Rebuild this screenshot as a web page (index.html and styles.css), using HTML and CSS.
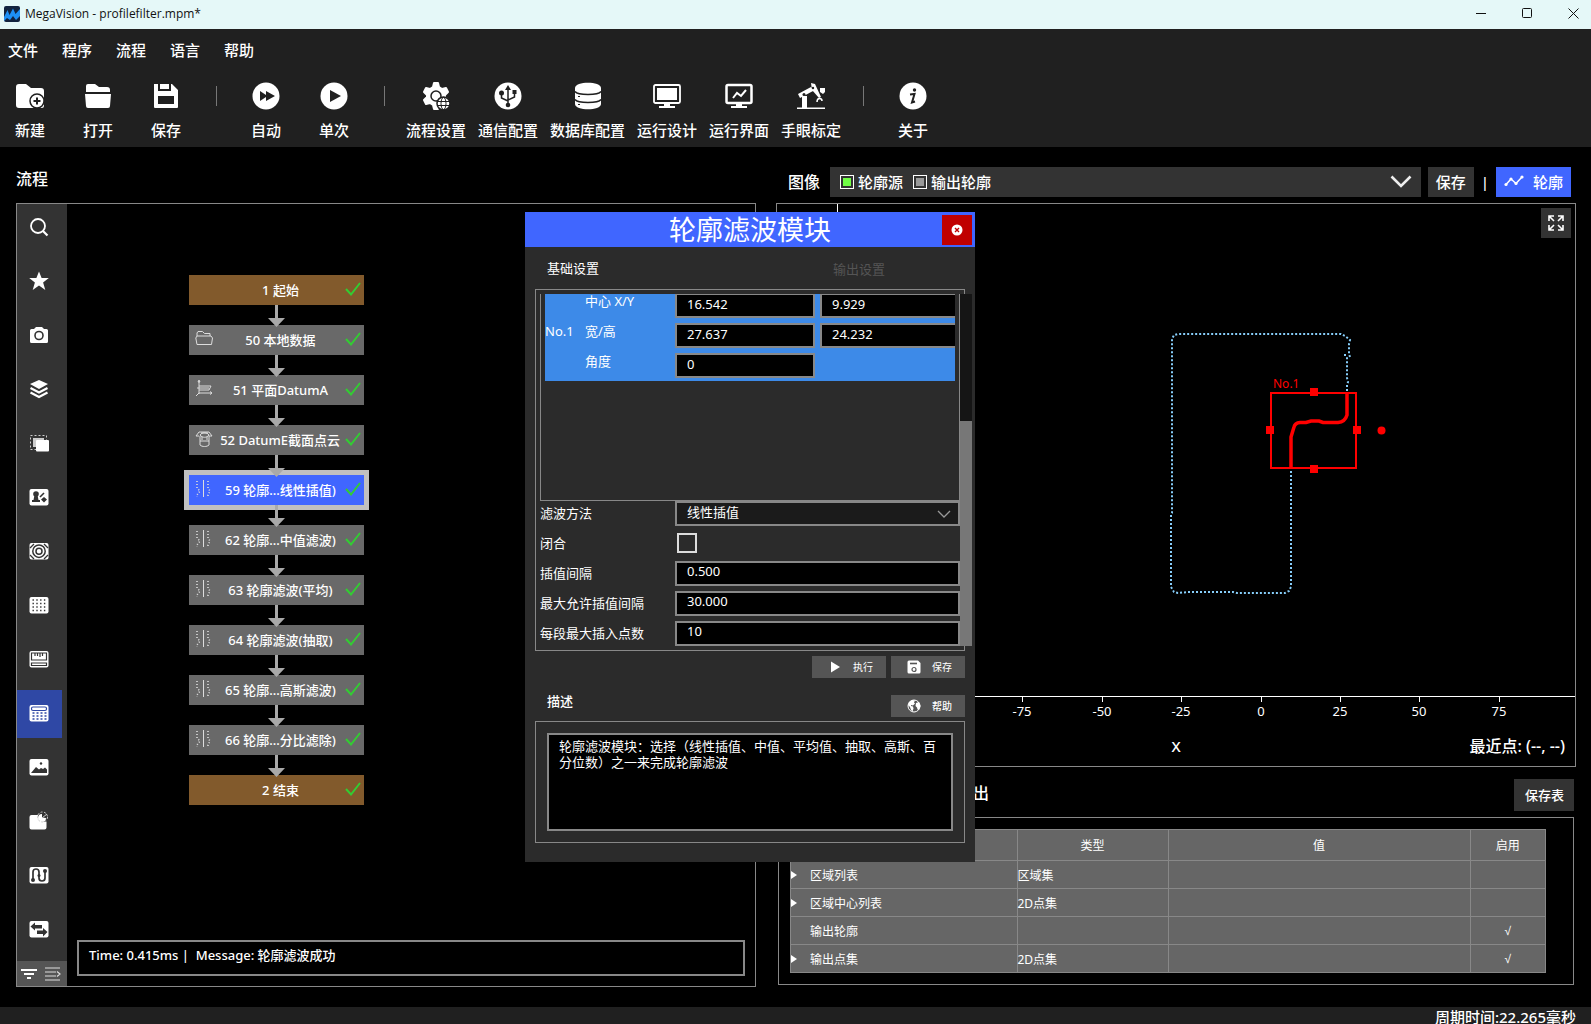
FILE: index.html
```html
<!DOCTYPE html>
<html lang="zh-CN">

<head>
    <meta charset="UTF-8">
    <meta name="viewport" content="width=device-width, initial-scale=1.0">
    <title>MegaVision - profilefilter.mpm*</title>
    <link rel="stylesheet" href="styles.css">
</head>

<body>
    <header class="titlebar">
        <svg class="logo" width="16" height="16" viewBox="0 0 16 16">
            <rect width="16" height="16" rx="2" fill="#12233f" />
            <path d="M0 11 3.500 4 5.500 9 9 2.500 11.500 8 16 3v7l-4 4-3-4-3 4-3-2-3 3z" fill="#1e90f5" />
        </svg>
        <span class="title">MegaVision - profilefilter.mpm*</span>
        <div class="win-btns">
            <button aria-label="最小化"><svg width="11" height="11" viewBox="0 0 11 11"><path d="M0 5.500h10" /></svg></button>
            <button aria-label="最大化"><svg width="11" height="11" viewBox="0 0 11 11"><rect x=".5" y=".5" width="9" height="9" rx="1" /></svg></button>
            <button aria-label="关闭"><svg width="11" height="11" viewBox="0 0 11 11"><path d="M.5.5l10 10M10.500.5l-10 10" /></svg></button>
        </div>
    </header>

    <div class="top">
        <nav class="menu">
            <a href="#">文件</a>
            <a href="#">程序</a>
            <a href="#">流程</a>
            <a href="#">语言</a>
            <a href="#">帮助</a>
        </nav>
        <div class="toolbar">
            <button>
                <svg viewBox="0 0 28 28"><path fill="#fff" d="M0 5a3 3 0 0 1 3-3h7l5 4h10a3 3 0 0 1 3 3v15a2 2 0 0 1-2 2H3a3 3 0 0 1-3-3z" /><circle cx="21" cy="19" r="7" fill="#fff" stroke="#202020" stroke-width="1.500" /><path d="M21 15.500v7M17.500 19h7" stroke="#202020" stroke-width="2" /></svg>
                <span>新建</span>
            </button>
            <button>
                <svg viewBox="0 0 28 28"><path fill="#fff" d="M2 10V4a2 2 0 0 1 2-2h7l4 3h8a3 3 0 0 1 3 3v2zM1 12h26l-1 12a2 2 0 0 1-2 2H4a2 2 0 0 1-2-2z" /></svg>
                <span>打开</span>
            </button>
            <button>
                <svg viewBox="0 0 28 28"><path fill="#fff" fill-rule="evenodd" d="M2 2h4v7h13V2h1l6 6v17a1 1 0 0 1-1 1H3a1 1 0 0 1-1-1zM6 14v8h16v-8z" /><path fill="#fff" d="M8 2h9v5H8z" /></svg>
                <span>保存</span>
            </button>
            <i class="sep"></i>
            <button>
                <svg viewBox="0 0 28 28"><circle cx="14" cy="14" r="13.500" fill="#fff" /><path d="M8 9l6 4V9l9 5-9 5v-4l-6 4z" fill="#202020" /></svg>
                <span>自动</span>
            </button>
            <button>
                <svg viewBox="0 0 28 28"><circle cx="14" cy="14" r="13.500" fill="#fff" /><path d="M10 8l11 6-11 6z" fill="#202020" /></svg>
                <span>单次</span>
            </button>
            <i class="sep"></i>
            <button>
                <svg viewBox="0 0 28 28"><path fill="#fff" stroke="#fff" stroke-width="2" stroke-linejoin="round" d="M12 1h4l1 4 3 2 4-1 2 4-3 3v2l3 3-2 4-4-1-3 2-1 4h-4l-1-4-3-2-4 1-2-4 3-3v-2L2 10l2-4 4 1 3-2z" /><circle cx="14" cy="14" r="5" fill="none" stroke="#202020" stroke-width="1.500" /><circle cx="21.500" cy="21.500" r="6.500" fill="#fff" stroke="#202020" stroke-width="1.500" /><g fill="none" stroke="#202020"><ellipse cx="21.500" cy="21.500" rx="2.500" ry="6" /><path d="M15.500 19.500h12M15.500 23.500h12" /></g></svg>
                <span>流程设置</span>
            </button>
            <button>
                <svg viewBox="0 0 28 28"><circle cx="14" cy="14" r="13.500" fill="#fff" /><g fill="none" stroke="#202020" stroke-width="1.500"><path d="M14 22V6M7.500 12v4l6.500 3M20.500 12v3L14 18" /></g><path d="M14 3l3 5h-6zM18.500 8h4v4h-4z" fill="#202020" /><circle cx="7.500" cy="11" r="2.500" fill="#202020" /><circle cx="14" cy="23" r="2.300" fill="#202020" /></svg>
                <span>通信配置</span>
            </button>
            <button>
                <svg viewBox="0 0 28 28"><path fill="#fff" d="M1 6c0-7 26-7 26 0v16c0 7-26 7-26 0z" /><path d="M1 9.500c3 4 23 4 26 0M1 17.500c3 4 23 4 26 0" fill="none" stroke="#202020" stroke-width="1.500" /><path d="M4 14.500h2M4 22.500h2" stroke="#202020" /></svg>
                <span>数据库配置</span>
            </button>
            <button>
                <svg viewBox="0 0 28 28"><rect x="1" y="3" width="26" height="18" rx="1.500" fill="none" stroke="#fff" stroke-width="1.800" /><path fill="#fff" d="M4 6h20v12H4zM11 21h6v3h5v2H6v-2h5z" /></svg>
                <span>运行设计</span>
            </button>
            <button>
                <svg viewBox="0 0 28 28"><rect x="1.500" y="3" width="25" height="18" rx="1.500" fill="none" stroke="#fff" stroke-width="2.500" /><path d="M8 16l4-5 4 3 5-6" fill="none" stroke="#fff" stroke-width="2" /><path fill="#fff" d="M11 21h6v3h5v2H6v-2h5z" /></svg>
                <span>运行界面</span>
            </button>
            <button>
                <svg viewBox="0 0 28 28"><path fill="#fff" d="M0 25.500h28V27H0zM5 14h5v11.500H5zM1 12L14 5l2 4-13 7zM14 1l4 1 6 13-2 1L15 8zM23 6h5v4l-2 2-3-2z" /><circle cx="7" cy="12.500" r="1.500" fill="#202020" /><circle cx="16" cy="6" r="1.200" fill="#202020" /><path d="M20 20c0-5 5-4 5-1" fill="none" stroke="#fff" stroke-width="1.500" /></svg>
                <span>手眼标定</span>
            </button>
            <i class="sep"></i>
            <button>
                <svg viewBox="0 0 28 28"><circle cx="14" cy="14" r="13.500" fill="#fff" /><circle cx="15.500" cy="8" r="1.700" fill="#202020" /><path d="M11 12.500l4.500-.5-2.500 8.500 3-1" fill="none" stroke="#202020" stroke-width="2" /></svg>
                <span>关于</span>
            </button>
        </div>
    </div>

    <main class="main">
        <!-- 流程 -->
        <section class="flow">
            <h2>流程</h2>
            <div class="flow-panel">
                <aside class="side">
                    <div class="side-tools">
                        <button aria-label="搜索"><svg viewBox="0 0 20 18"><circle cx="9" cy="8" r="7" fill="none" stroke="#fff" stroke-width="1.800" /><path d="M14 13l4.500 4.500" stroke="#fff" stroke-width="2.200" /></svg></button>
                        <button aria-label="收藏"><svg viewBox="0 0 20 18"><path fill="#fff" d="M10-.5l2.600 6.600h7.200l-5.700 4.300 2.200 7.600-6.300-4.500L3.700 18l2.200-7.600L.2 6.100h7.200z" /></svg></button>
                        <button aria-label="相机"><svg viewBox="0 0 20 18"><path fill="#fff" d="M2.500 3H5l2-2h6l2 2h2.500A1.500 1.500 0 0 1 19 4.500v11a1.500 1.500 0 0 1-1.500 1.500h-15A1.500 1.500 0 0 1 1 15.500v-11A1.500 1.500 0 0 1 2.500 3z" /><circle cx="10" cy="9.500" r="4" fill="none" stroke="#333" stroke-width="1.600" /></svg></button>
                        <button aria-label="图层"><svg viewBox="0 0 20 18"><path fill="#fff" d="M10 0l9 4-9 5-9-5z" /><path d="M1.500 8l8.500 4.500L18.500 8M1.500 12.500L10 17l8.500-4.500" fill="none" stroke="#fff" stroke-width="2.200" /></svg></button>
                        <button aria-label="区域"><svg viewBox="0 0 20 18"><rect x="1.500" y="1.500" width="16" height="14" fill="none" stroke="#ccc" stroke-dasharray="2 2" /><path fill="#ccc" d="M4 4h11v9H4z" /><rect x="7" y="6" width="13" height="11.500" rx="1" fill="#fff" /></svg></button>
                        <button aria-label="标定"><svg viewBox="0 0 20 18"><rect x=".5" y="1" width="19" height="16.500" rx="2" fill="#fff" /><g fill="#333"><circle cx="7" cy="6" r="2.800" /><path d="M5.500 7h3l1 5h-5zM3 12h8v2H3zM15 9l3 2.500-3 3-3-3z" /></g><path d="M11 9l4-4" stroke="#333" stroke-width="1.600" /></svg></button>
                        <button aria-label="定位"><svg viewBox="0 0 20 18"><rect x=".5" y="1" width="19" height="16.500" rx="2" fill="#fff" /><g fill="none" stroke="#333" stroke-width="1.500"><circle cx="10" cy="9.200" r="6.200" /><circle cx="10" cy="9.200" r="3" /><path d="M1 6l4-4M15 2l4 4M1 13l4 4M15 17l4-4" stroke-width="1.300" /></g></svg></button>
                        <button aria-label="网格"><svg viewBox="0 0 20 18"><rect x=".5" y="1" width="19" height="16.500" rx="2" fill="#fff" /><path d="M3.500 4h14M3.500 7.500h14M3.500 11h14M3.500 14.500h14" stroke="#333" stroke-width="1.300" stroke-dasharray="1.400 2.400" /></svg></button>
                        <button aria-label="测量"><svg viewBox="0 0 20 18"><rect x=".5" y="1" width="19" height="16.500" rx="2" fill="#fff" /><path d="M2.500 3h15v7h-15zM2.500 15.500v-2.500h15v2.500z" fill="none" stroke="#333" stroke-width="1.200" /><path d="M6 3v3M8.500 3v3M11 3v4M13.500 3v3" stroke="#333" stroke-width="1.200" /></svg></button>
                        <button class="active" aria-label="计算"><svg viewBox="0 0 20 18"><rect x=".5" y="1" width="19" height="16.500" rx="2" fill="#fff" /><rect x="2.500" y="3" width="15" height="3.500" rx="1.500" fill="none" stroke="#2f48a5" stroke-width="1.200" /><path d="M3.500 9h14M3.500 12h14M3.500 15h14" stroke="#2f48a5" stroke-width="1.400" stroke-dasharray="2 2" /></svg></button>
                        <button aria-label="图像"><svg viewBox="0 0 20 18"><rect x=".5" y="1" width="19" height="16.500" rx="2" fill="#fff" /><path d="M2 15l5-6 3 2.500 2-1.500 2 1 2-1.500 2 2V15z" fill="#333" /><circle cx="12" cy="5.500" r="1.200" fill="#333" /></svg></button>
                        <button aria-label="形状"><svg viewBox="0 0 20 18"><path fill="#fff" d="M2.500 3H9c-1 5 3 7.500 8.500 6.500v6a2 2 0 0 1-2 2h-13a2 2 0 0 1-2-2V5a2 2 0 0 1 2-2z" /><path fill="#fff" d="M13 5.500V2a4 4 0 1 0 4 4z" /><circle cx="13.500" cy="5" r="5" fill="none" stroke="#ccc" stroke-dasharray="2 1.500" /><path d="M13 6l5-4" stroke="#ccc" /></svg></button>
                        <button aria-label="路径"><svg viewBox="0 0 20 18"><rect x=".5" y="1" width="19" height="16.500" rx="2" fill="#fff" /><path d="M4 14V6c0-4 6-4 6 0v6c0 4 6 4 6 0V5" fill="none" stroke="#333" stroke-width="1.700" /><g fill="#333"><circle cx="4" cy="14" r="2" /><circle cx="16" cy="5" r="2" /><circle cx="10" cy="9.500" r="1.500" /></g></svg></button>
                        <button aria-label="转换"><svg viewBox="0 0 20 18"><rect x=".5" y="1" width="19" height="16.500" rx="2" fill="#fff" /><path fill="#333" d="M1.500 6.500L6 2.500v2.500h7v3.500H6v2zM18.500 12L14 8v2.500H8V14h6v2.500z" /></svg></button>
                    </div>
                    <div class="side-foot">
                        <button aria-label="筛选"><svg width="18" height="16" viewBox="0 0 18 16"><path d="M1 4h16M4 8h10M7 12h4" stroke="#fff" stroke-width="1.800" /></svg></button>
                        <button aria-label="展开"><svg width="18" height="16" viewBox="0 0 18 16"><path d="M1 2h15M1 6h11M1 10h11M1 14h15M13 5.500L16 8l-3 2.500" fill="none" stroke="#ddd" stroke-width="1.200" /></svg></button>
                    </div>
                </aside>
                <div class="canvas">
                    <div class="nodes"></div>
                    <div class="message">Time: 0.415ms |&nbsp; Message: 轮廓滤波成功</div>
                </div>
            </div>
        </section>

        <section class="right">
            <div class="image-bar">
                <h2>图像</h2>
                <div class="source">
                    <label><input type="checkbox" checked><span>轮廓源</span></label>
                    <label><input type="checkbox"><span>输出轮廓</span></label>
                    <button class="drop" aria-label="展开列表"><svg width="22" height="14" viewBox="0 0 22 14"><path d="M1.500 1.500L11 11l9.500-9.500" fill="none" stroke="#eee" stroke-width="2.600" /></svg></button>
                </div>
                <button class="btn">保存</button>
                <span class="bar">|</span>
                <button class="btn blue">
                    <svg width="20" height="12" viewBox="0 0 20 12"><path d="M2 9.500l5-5.500 5 4.500 6-6.500" fill="none" stroke="#fff" stroke-width="1.500" /><g fill="#fff"><circle cx="2" cy="9.500" r="1.600" /><circle cx="7" cy="4" r="1.600" /><circle cx="12" cy="8.500" r="1.600" /><circle cx="18" cy="2" r="1.600" /></g></svg>
                    轮廓
                </button>
            </div>

            <div class="chart">
                <button class="expand" aria-label="全屏"><svg width="16" height="16" viewBox="0 0 16 16"><path d="M1 6V1h5M1 1l5 5M10 1h5v5M15 1l-5 5M1 10v5h5M1 15l5-5M15 10v5h-5M15 15l-5-5" fill="none" stroke="#fff" stroke-width="1.600" /></svg></button>
                <svg class="plot" viewBox="777 204 798 520">
                    <g class="axis">
                        <path d="M837.500 204V696.500H1575" />
                        <path d="M863.500 697v5M943.500 697v5M1022.500 697v5M1102.500 697v5M1181.500 697v5M1261.500 697v5M1340.500 697v5M1419.500 697v5M1499.500 697v5" />
                    </g>
                    <g class="tick">
                        <text x="1022" y="716">-75</text>
                        <text x="1102" y="716">-50</text>
                        <text x="1181" y="716">-25</text>
                        <text x="1261" y="716">0</text>
                        <text x="1340" y="716">25</text>
                        <text x="1419" y="716">50</text>
                        <text x="1499" y="716">75</text>
                    </g>
                    <path class="outline" d="M1347 391V385L1348 382L1347 378V357M1344 355h2M1350 357L1349 354V344L1350 340L1345 336L1341 334H1178L1174 335L1172 339V513L1171 515V587L1174 592L1178 593L1188 592H1233L1237 593H1285L1289 591L1291 587V470" />
                    <g class="region">
                        <rect x="1271" y="393" width="85" height="75" />
                        <path d="M1347 393V415Q1345 422 1338 422.500H1323L1319 421H1311L1306 422.500H1300Q1295 423 1294 427L1291 437V469" stroke-width="3.500" />
                        <path class="fill" d="M1310 388h8v8h-8zM1266 426h8v8h-8zM1353 426h8v8h-8zM1310 465h8v8h-8z" />
                        <circle class="fill" cx="1381.500" cy="430.500" r="4" />
                        <text x="1273" y="388">No.1</text>
                    </g>
                </svg>
                <div class="chart-foot">
                    <span>X</span>
                    <span class="near">最近点: (--, --)</span>
                </div>
            </div>

            <div class="out-bar">
                <h2>输出</h2>
                <button class="btn save-table">保存表</button>
            </div>
            <div class="out">
                <table>
                    <colgroup>
                        <col class="c1">
                        <col class="c2">
                        <col class="c3">
                        <col class="c4">
                    </colgroup>
                    <thead>
                        <tr><th>名称</th><th>类型</th><th>值</th><th>启用</th></tr>
                    </thead>
                    <tbody>
                        <tr><td class="name more">区域列表</td><td>区域集</td><td></td><td></td></tr>
                        <tr><td class="name more">区域中心列表</td><td>2D点集</td><td></td><td></td></tr>
                        <tr><td class="name">输出轮廓</td><td></td><td></td><td class="on">√</td></tr>
                        <tr><td class="name more">输出点集</td><td>2D点集</td><td></td><td class="on">√</td></tr>
                    </tbody>
                </table>
            </div>
        </section>
    </main>

    <footer class="status">周期时间:22.265毫秒</footer>

    <!-- 模块窗口 -->
    <div class="dialog" role="dialog" aria-labelledby="dlg-title">
        <div class="dlg-head">
            <h1 id="dlg-title">轮廓滤波模块</h1>
            <button class="close" aria-label="关闭"><svg width="12" height="12" viewBox="0 0 12 12"><circle cx="6" cy="6" r="5.500" fill="#fff" /><path d="M4 4l4 4M8 4l-4 4" stroke="#c00000" stroke-width="1.400" /></svg></button>
        </div>
        <div class="tabs">
            <button class="tab on">基础设置</button>
            <button class="tab">输出设置</button>
        </div>
        <div class="params">
            <div class="scroll">
                <div class="regions">
                    <div class="item">
                        <span class="no">No.1</span>
                        <label for="cx">中心 X/Y</label>
                        <input id="cx" value="16.542">
                        <input aria-label="中心 Y" value="9.929">
                        <label for="rw">宽/高</label>
                        <input id="rw" value="27.637">
                        <input aria-label="高" value="24.232">
                        <label for="ang">角度</label>
                        <input id="ang" value="0">
                    </div>
                </div>
                <div class="field">
                    <label for="method">滤波方法</label>
                    <div class="select">
                        <select id="method">
                            <option>线性插值</option>
                        </select>
                        <svg width="14" height="8" viewBox="0 0 14 8"><path d="M1 1l6 6 6-6" fill="none" stroke="#999" stroke-width="1.300" /></svg>
                    </div>
                </div>
                <div class="field">
                    <label for="closed">闭合</label>
                    <input type="checkbox" id="closed">
                </div>
                <div class="field">
                    <label for="gap">插值间隔</label>
                    <input id="gap" value="0.500">
                </div>
                <div class="field">
                    <label for="maxgap">最大允许插值间隔</label>
                    <input id="maxgap" value="30.000">
                </div>
                <div class="field">
                    <label for="maxnum">每段最大插入点数</label>
                    <input id="maxnum" value="10">
                </div>
            </div>
            <div class="track"><div class="thumb"></div></div>
        </div>
        <div class="actions">
            <button class="small"><svg width="14" height="14" viewBox="0 0 14 14"><path d="M3 1.500l9 5.500-9 5.500z" fill="#fff" /></svg><span>执行</span></button>
            <button class="small"><svg width="14" height="14" viewBox="0 0 14 14"><path d="M.5 2A1.500 1.500 0 0 1 2 .5h9L13.500 3v9a1.500 1.500 0 0 1-1.500 1.500H2A1.500 1.500 0 0 1 .5 12z" fill="#fff" /><path d="M3 3.500h7" stroke="#555" stroke-width="1.600" /><circle cx="7" cy="9.500" r="2" fill="none" stroke="#555" stroke-width="1.200" /></svg><span>保存</span></button>
        </div>
        <div class="desc-head">
            <span>描述</span>
            <button class="small"><svg width="14" height="14" viewBox="0 0 14 14"><circle cx="7" cy="7" r="6" fill="none" stroke="#fff" /><path fill="#fff" d="M2 3l3-2 3 .5-1 2 1 1-2 2-2-.5v1l2 .5.5 2-1 3L4 11 3 8 1 6zM9 4l3-1 1.500 4L12 11l-1.500-.5-.5-2L8.500 7z" /></svg><span>帮助</span></button>
        </div>
        <div class="desc">
            <textarea aria-label="描述" readonly>轮廓滤波模块：选择（线性插值、中值、平均值、抽取、高斯、百分位数）之一来完成轮廓滤波</textarea>
        </div>
    </div>

    <script src="script.js"></script>
</body>

</html>
```
FILE: script.js
```js
// 流程节点
const nodes = [
    { text: '1 起始', type: 'end' },
    { text: '50 本地数据', icon: 'folder' },
    { text: '51 平面DatumA', icon: 'plane' },
    { text: '52 DatumE截面点云', icon: 'cloud' },
    { text: '59 轮廓…线性插值)', icon: 'filter', type: 'selected' },
    { text: '62 轮廓…中值滤波)', icon: 'filter' },
    { text: '63 轮廓滤波(平均)', icon: 'filter' },
    { text: '64 轮廓滤波(抽取)', icon: 'filter' },
    { text: '65 轮廓…高斯滤波)', icon: 'filter' },
    { text: '66 轮廓…分比滤除)', icon: 'filter' },
    { text: '2 结束', type: 'end' }
]

const icons = {
    folder: '<path d="M2 6V3l1-1.500h4.500l2 2H15V6M2 6h14l1.500 2-1 6.500H2L.8 8z"/>',
    plane: '<path d="M4 1v13M1 16l3-3h13M4 6h12l-2 4H4M2 8h12M4 0L3 2h2zM15 11.500l2 1.500-2 1.500"/>',
    cloud: '<path d="M1 6l3-4h10l3 4h-3M1 6h3M5 6v9c2 2 7 2 9 0V6M5 5c2-3 7-3 9 0-2 3-7 3-9 0M6 3h7M5 11h9M7 7v3M12 7v3"/>',
    filter: '<path d="M8.500 0v17"/><path d="M2 1v7l3 3-3 4v2M13 1v7l2 3-2 4v2" stroke-dasharray="1 2" stroke-width="1.600"/>'
}

const nodesEl = document.querySelector('.nodes')

nodes.forEach((node, i) => {
    const icon = node.icon ? `<svg width="18" height="18" viewBox="0 0 18 18">${icons[node.icon]}</svg>` : ''
    const arrow = i === 0 ? '' : `
        <svg class="arrow" width="17" height="22" viewBox="0 0 17 22">
            <path d="M7 0h3v13h7l-8.500 9L0 13h7z"/>
        </svg>`
    nodesEl.innerHTML += `${arrow}
        <div class="node ${node.type || ''}">
            <span class="node-icon">${icon}</span>
            <span class="node-text">${node.text}</span>
            <svg class="check" width="16" height="14" viewBox="0 0 16 14"><path d="M1 7l5 5.500L15 1"/></svg>
        </div>`
})
```
FILE: styles.css
```css
* {
    margin: 0;
    padding: 0;
    box-sizing: border-box;
}

body {
    display: flex;
    flex-direction: column;
    height: 100vh;
    overflow: hidden;
    background-color: #000;
    color: #fff;
    font-family: "Noto Sans", "Noto Sans CJK SC", sans-serif;
    font-size: 13px;
}

button,
input,
select,
textarea {
    font: inherit;
    color: inherit;
    border: none;
    background: none;
}

svg {
    display: block;
    overflow: visible;
    flex: none;
}

h2 {
    font-size: 16px;
    line-height: 24px;
    font-weight: 500;
}

/* 标题栏 */
.titlebar {
    display: flex;
    align-items: center;
    flex: none;
    height: 29px;
    padding: 0 0 2px 4px;
    background-color: #e5f8f8;
    color: #111;
}

.titlebar .title {
    flex: 1;
    margin-left: 5px;
    font-family: "Open Sans", "Noto Sans", sans-serif;
    font-size: 12px;
}

.win-btns {
    display: flex;
}

.win-btns button {
    display: flex;
    align-items: center;
    justify-content: center;
    width: 46px;
    height: 27px;
}

.win-btns button:last-child {
    width: 41px;
    padding-left: 5px;
}

.win-btns svg {
    fill: none;
    stroke: #111;
}

/* 菜单和工具栏 */
.top {
    flex: none;
    height: 118px;
    background-color: #202020;
    font-size: 15px;
    font-weight: 500;
}

.menu {
    display: flex;
    gap: 24px;
    padding: 9px 8px 0;
    line-height: 24px;
}

.menu a {
    color: #fff;
    text-decoration: none;
}

.toolbar {
    display: flex;
    margin: 20px 0 0 -4px;
}

.toolbar button {
    display: flex;
    flex-direction: column;
    align-items: center;
    gap: 8px;
    min-width: 68px;
    padding: 0 6px;
    line-height: 24px;
    white-space: nowrap;
}

.toolbar svg {
    width: 28px;
    height: 28px;
}

.toolbar .sep {
    width: 1px;
    height: 20px;
    margin: 4px 15px 0 16px;
    background-color: #777;
}

.main {
    flex: 1;
    display: grid;
    grid-template-columns: minmax(0, 37fr) minmax(0, 40fr);
    gap: 20px;
    min-height: 0;
    padding: 20px 15px 20px 16px;
}

/* 左侧流程 */
.flow {
    display: flex;
    flex-direction: column;
    gap: 12px;
    min-height: 0;
}

.flow-panel {
    flex: 1;
    display: flex;
    min-height: 0;
    border: 1px solid #888;
}

.side {
    display: flex;
    flex-direction: column;
    justify-content: space-between;
    width: 50px;
    background-color: #333;
}

.side-tools {
    display: flex;
    flex-direction: column;
    gap: 6px;
}

.side-tools button {
    display: flex;
    align-items: center;
    justify-content: center;
    width: 45px;
    height: 48px;
    padding: 0 2px 2px 0;
}

.side-tools svg {
    width: 20px;
    height: 18px;
}

.side-tools .active {
    background-color: #2f48a5;
}

.side-foot {
    display: flex;
    justify-content: space-around;
    align-items: center;
    height: 25px;
    padding-right: 2px;
    background-color: #555;
}

.canvas {
    flex: 1;
    display: flex;
    flex-direction: column;
    justify-content: space-between;
    padding: 71px 10px 10px;
}

.nodes {
    width: 175px;
    margin-left: 112px;
}

.node {
    display: flex;
    align-items: center;
    height: 30px;
    background-color: #696969;
    font-weight: 500;
    white-space: nowrap;
}

.node.end {
    background-color: #825a2c;
}

.node.selected {
    background-color: #4066ff;
    outline: 5px solid #c0c0c0;
}

.node-icon {
    width: 32px;
    padding: 0 0 2px 6px;
    fill: none;
    stroke: #ddd;
}

.node-text {
    flex: 1;
    padding-bottom: 2px;
    text-align: center;
}

.check {
    margin: 0 3px 2px 5px;
    fill: none;
    stroke: #32cd32;
    stroke-width: 2;
}

.arrow {
    position: relative;
    z-index: 1;
    margin: 0 auto -2px;
    fill: #a9a9a9;
}

.message {
    height: 36px;
    padding: 0 10px;
    border: 2px solid #888;
    line-height: 26px;
    font-weight: 500;
}

/* 图像 */
.right {
    display: flex;
    flex-direction: column;
    min-height: 0;
}

.image-bar {
    display: flex;
    align-items: center;
    margin-bottom: 6px;
    padding: 0 5px 0 12px;
    font-size: 15px;
    font-weight: 500;
}

.source {
    flex: 1;
    display: flex;
    align-items: center;
    gap: 10px;
    height: 30px;
    margin: 0 7px 0 10px;
    padding: 0 9px 0 10px;
    background-color: #333;
}

.source label {
    display: flex;
    align-items: center;
    gap: 4px;
}

.source span {
    padding-bottom: 2px;
}

.source input {
    appearance: none;
    width: 14px;
    height: 14px;
    padding: 2px;
    border: 1px solid #fff;
    background: #999 content-box;
}

.source input:checked {
    background-color: #70ff45;
}

.drop {
    margin-left: auto;
}

.btn {
    display: flex;
    align-items: center;
    gap: 9px;
    height: 30px;
    padding: 0 8px 2px;
    background-color: #333;
}

.btn.blue {
    background-color: #4066ff;
}

.bar {
    margin: 0 7px;
}

.chart {
    position: relative;
    flex: 1;
    display: flex;
    flex-direction: column;
    min-height: 0;
    border: 1px solid #888;
}

.expand {
    position: absolute;
    top: 4px;
    right: 4px;
    padding: 7px;
    background-color: #333;
}

.plot {
    flex: 1;
    width: 100%;
    min-height: 0;
}

.axis {
    fill: none;
    stroke: #fff;
}

.tick {
    fill: #fff;
    font-size: 13px;
    text-anchor: middle;
}

.outline {
    fill: none;
    stroke: #87cefa;
    stroke-width: 2;
    stroke-dasharray: 2 2;
}

.region {
    fill: none;
    stroke: #f00;
    stroke-width: 2;
}

.region .fill {
    fill: #f00;
    stroke: none;
}

.region text {
    fill: #f00;
    stroke: none;
    font-size: 12px;
}

.chart-foot {
    display: grid;
    grid-template-columns: 1fr auto 1fr;
    height: 42px;
    padding: 10px 10px 0;
    font-size: 15px;
    line-height: 24px;
    font-weight: 500;
}

.chart-foot span:first-child {
    grid-column: 2;
}

.chart-foot .near {
    font-size: 16px;
    text-align: right;
}

/* 输出 */
.out-bar {
    display: flex;
    justify-content: space-between;
    align-items: center;
    margin: 12px 2px 6px;
    padding-left: 179px;
    font-weight: 500;
}

.out-bar h2 {
    padding-bottom: 4px;
}

.save-table {
    height: 32px;
    padding: 0 10px 2px 11px;
}

.out {
    height: 168px;
    margin: 0 2px 2px;
    padding: 11px 27px 0 11px;
    border: 1px solid #888;
}

table {
    width: 100%;
    table-layout: fixed;
    border-collapse: collapse;
    background-color: #666;
    font-size: 12px;
}

th,
td {
    height: 28px;
    border: 1px solid #888;
    font-weight: 400;
}

th {
    height: 31px;
}

.c1 {
    width: 30%;
}

.c2 {
    width: 20%;
}

.c3 {
    width: 40%;
}

.name {
    padding-left: 19px;
}

.name.more::before {
    content: "";
    float: left;
    margin: 5px 0 0 -19px;
    border: 4px solid transparent;
    border-left: 6px solid #fff;
    border-right: none;
}

.on {
    font-family: "Liberation Sans", sans-serif;
    text-align: center;
}

.status {
    flex: none;
    height: 17px;
    padding-right: 15px;
    background-color: #202020;
    font-size: 15px;
    line-height: 20px;
    font-weight: 500;
    text-align: right;
}

/* 模块窗口 */
.dialog {
    position: absolute;
    left: 525px;
    top: 212px;
    width: 450px;
    padding-bottom: 19px;
    background-color: #2b2b2b;
}

.dlg-head {
    display: grid;
    grid-template-columns: 30px 1fr 30px;
    align-items: center;
    height: 35px;
    padding: 0 3px;
    background-color: #4066ff;
}

.dlg-head h1 {
    grid-column: 2;
    font-size: 27px;
    line-height: 35px;
    font-weight: 400;
    text-align: center;
}

.close {
    display: flex;
    align-items: center;
    justify-content: center;
    width: 30px;
    height: 30px;
    background-color: #c00000;
}

.tabs {
    display: grid;
    grid-template-columns: 286px 1fr;
    height: 42px;
    padding: 12px 22px 0;
}

.tab {
    height: 20px;
    line-height: 20px;
    text-align: left;
    color: #555;
}

.tab.on {
    color: #fff;
    font-weight: 500;
}

.params {
    display: flex;
    height: 362px;
    margin: 0 10px;
    padding: 4px 0 4px 4px;
    border: 1px solid #888;
}

.scroll {
    width: 420px;
    flex: none;
}

.regions {
    height: 207px;
    padding: 0 4px;
    border: 1px solid #888;
    border-top: none;
    overflow: hidden;
}

.item {
    display: grid;
    grid-template-columns: 40px 90px 140px 140px;
    grid-auto-rows: 30px;
    height: 88px;
    margin-top: -1px;
    overflow: hidden;
    background-color: #3d8ae8;
}

.item .no {
    grid-row: 1 / 4;
    line-height: 76px;
}

.item label {
    grid-column: 2;
    line-height: 17px;
}

.item input + input {
    margin-left: 5px;
}

.item input,
.field > input {
    width: 140px;
    height: 25px;
    padding: 0 10px 4px;
    border: 2px solid #888;
    background-color: #000;
}

.field {
    display: grid;
    grid-template-columns: 135px 1fr;
    height: 30px;
}

.field label {
    line-height: 24px;
}

.field > input {
    width: 100%;
    padding-bottom: 5px;
}

.field > input[type="checkbox"] {
    appearance: none;
    width: 20px;
    height: 20px;
    margin: 2px;
    padding: 0;
    border-color: #ddd;
    background: none;
}

.select {
    display: grid;
    align-items: center;
    height: 25px;
}

.select select,
.select svg {
    grid-area: 1 / 1;
}

.select select {
    appearance: none;
    width: 100%;
    height: 25px;
    padding: 0 10px 3px;
    border: 2px solid #888;
    background-color: #1b1b1b;
}

.select svg {
    justify-self: end;
    margin-right: 9px;
    pointer-events: none;
}

.track {
    flex: none;
    width: 12px;
    background-color: #151515;
}

.thumb {
    height: 225px;
    margin-top: 127px;
    background-color: #777;
}

.actions {
    display: flex;
    justify-content: flex-end;
    gap: 5px;
    margin: 5px 10px 0;
}

.small {
    display: flex;
    align-items: center;
    justify-content: space-between;
    width: 74px;
    height: 22px;
    padding: 0 13px 0 16px;
    background-color: #555;
    font-size: 10px;
}

.small span {
    padding-bottom: 1px;
}

.desc-head {
    display: flex;
    justify-content: space-between;
    margin: 17px 10px 4px;
    padding-left: 12px;
    line-height: 12px;
    font-weight: 500;
}

.desc {
    margin: 0 10px;
    padding: 11px;
    border: 1px solid #888;
}

.desc textarea {
    display: block;
    width: 100%;
    height: 98px;
    padding: 3px 10px;
    border: 2px solid #888;
    background-color: #000;
    line-height: 16px;
    resize: none;
}
```
